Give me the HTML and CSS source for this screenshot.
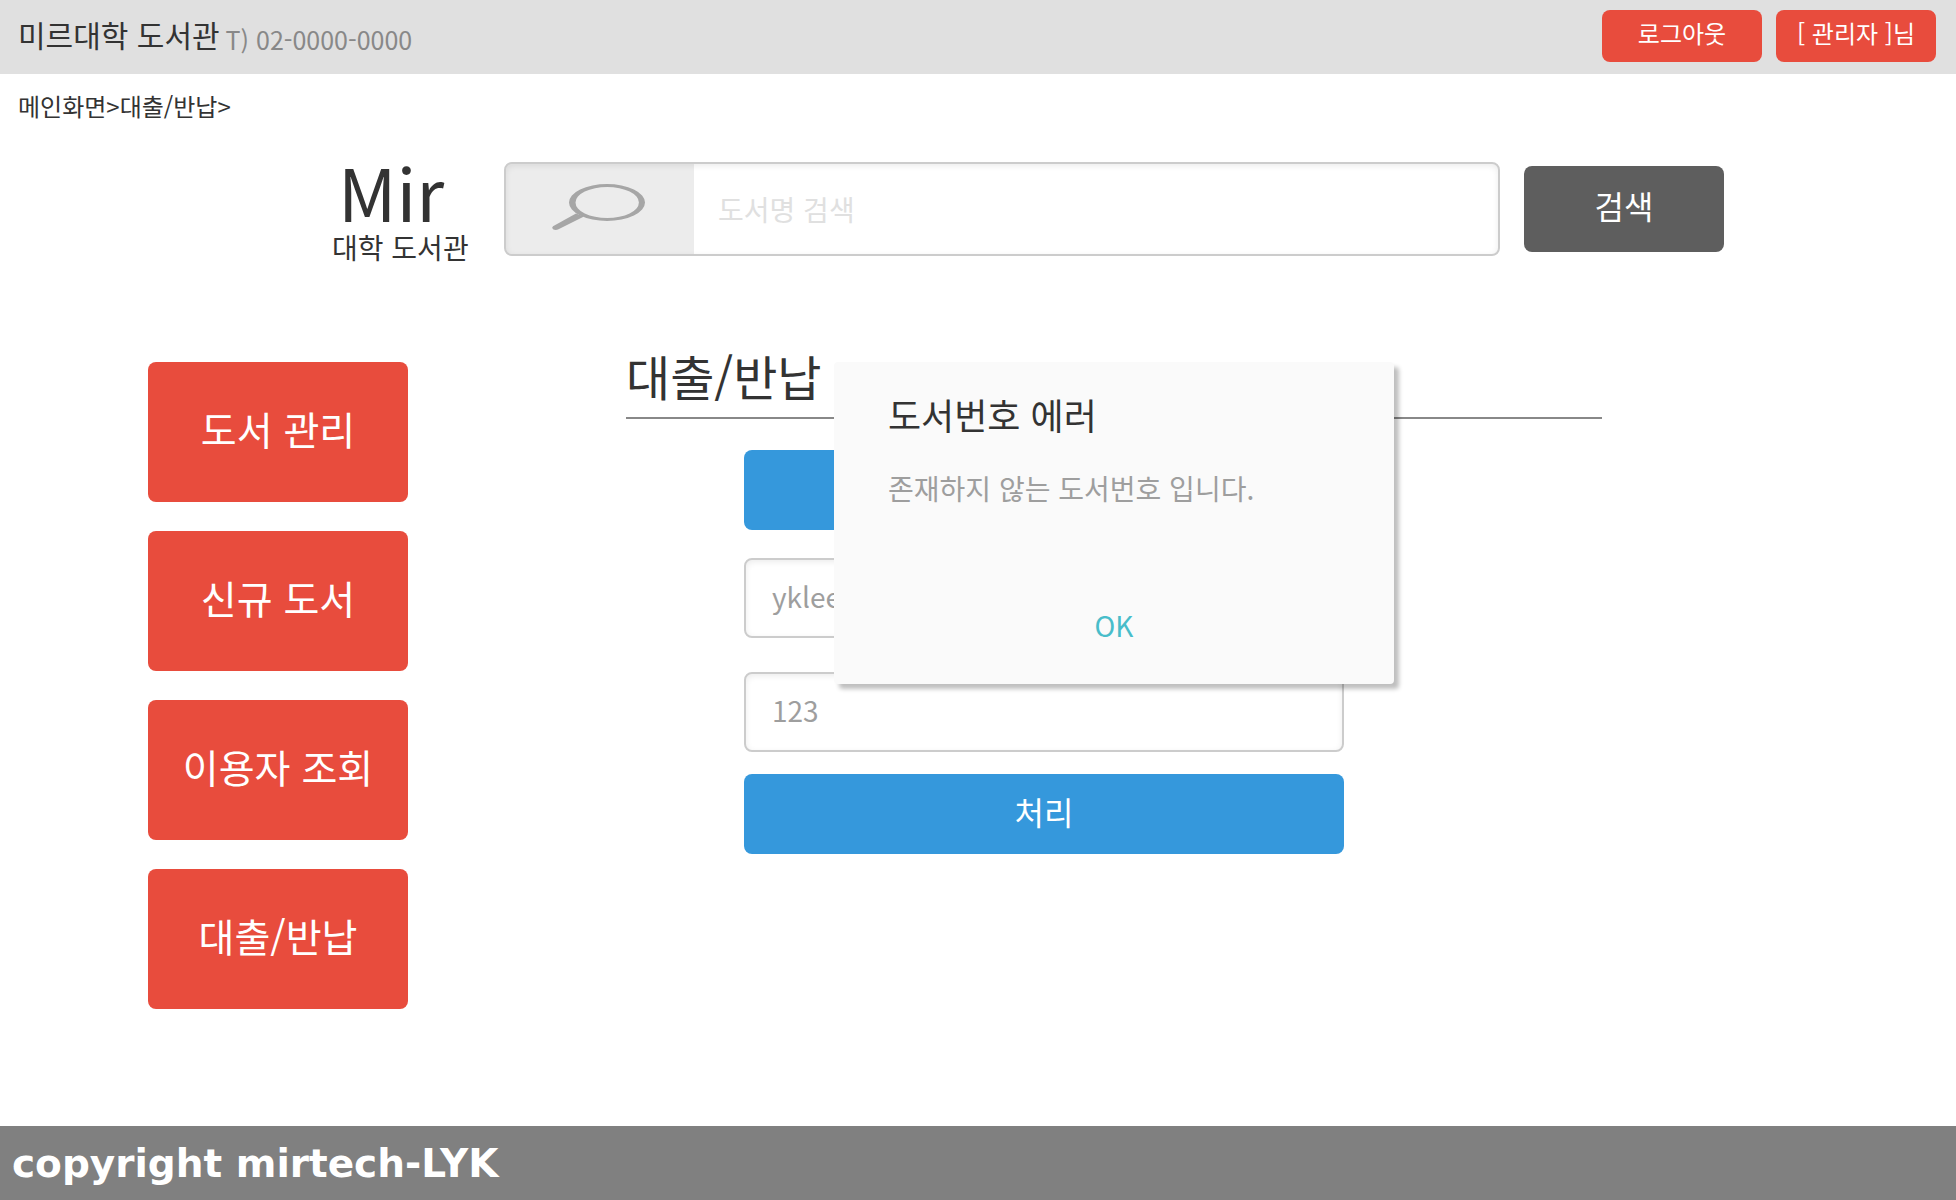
FILE: index.html
```html
<!DOCTYPE html>
<html lang="ko">
<head>
  <meta charset="utf-8">
  <meta name="viewport" content="width=device-width, initial-scale=1">
  <title>미르대학 도서관 - 대출/반납</title>
  <link rel="stylesheet" href="styles.css">
</head>
<body>
  <header class="topbar">
    <div class="topbar-brand">
      <span class="topbar-name">미르대학 도서관</span>
      <span class="topbar-phone">T) 02-0000-0000</span>
    </div>
    <div class="topbar-actions">
      <button type="button" class="btn btn-red btn-small">로그아웃</button>
      <button type="button" class="btn btn-red btn-small">[ 관리자 ]님</button>
    </div>
  </header>

  <nav class="breadcrumb" aria-label="현재 위치"><a href="#">메인화면</a>&gt;<a href="#">대출/반납</a>&gt;</nav>

  <form class="search" role="search">
    <a class="logo" href="#">
      <span class="logo-name">Mir</span>
      <span class="logo-sub">대학 도서관</span>
    </a>
    <div class="search-field">
      <label class="search-icon" for="book-search" aria-label="도서명">
        <svg width="94" height="50" viewBox="553 184 94 50" overflow="visible" aria-hidden="true">
          <path fill="#a6a6a6" fill-rule="evenodd" d="M569 202.500a38 18.500 0 1 0 76 0a38 18.500 0 1 0-76 0zM575.500 202.500a31.700 15.500 0 1 1 63.400 0a31.700 15.500 0 1 1-63.400 0z"/>
          <path fill="#a6a6a6" d="M576 213.500L553 226.300Q551.300 228 553 229.300Q555.500 230.600 558.500 229.300L584 216.500z"/>
        </svg>
      </label>
      <input class="search-input" id="book-search" type="text" placeholder="도서명 검색">
    </div>
    <button type="submit" class="btn btn-gray">검색</button>
  </form>

  <main class="content">
    <nav class="menu" aria-label="관리 메뉴">
      <button type="button" class="btn btn-red btn-menu">도서 관리</button>
      <button type="button" class="btn btn-red btn-menu">신규 도서</button>
      <button type="button" class="btn btn-red btn-menu">이용자 조회</button>
      <button type="button" class="btn btn-red btn-menu">대출/반납</button>
    </nav>

    <section class="panel">
      <h1 class="panel-title">대출/반납</h1>
      <form class="loan-form">
        <button type="button" class="btn btn-blue" aria-label="구분 선택"></button>
        <input class="text-input" type="text" value="yklee" aria-label="아이디">
        <input class="text-input text-input-book" type="text" value="123" aria-label="도서번호">
        <button type="submit" class="btn btn-blue btn-submit">처리</button>
      </form>

      <dialog class="alert" open aria-labelledby="alert-title">
        <h2 class="alert-title" id="alert-title">도서번호 에러</h2>
        <p class="alert-text">존재하지 않는 도서번호 입니다.</p>
        <button type="button" class="alert-ok">OK</button>
      </dialog>
    </section>
  </main>

  <footer class="footer">copyright mirtech-LYK</footer>
</body>
</html>
```

FILE: styles.css
```css
*,
*::before,
*::after {
  box-sizing: border-box;
}

body {
  margin: 0;
  min-height: 100vh;
  display: flex;
  flex-direction: column;
  background: #fff;
  color: #333;
  font-family: "Noto Sans CJK KR", sans-serif;
  font-size: 28px;
}

a {
  color: inherit;
  text-decoration: none;
}

button,
input {
  font: inherit;
}

/* Buttons */

.btn {
  border: 0;
  border-radius: 8px;
  padding: 0 0 8px;
  color: #fff;
  cursor: pointer;
}

.btn-red {
  background: #e84c3d;
}

.btn-blue {
  height: 80px;
  padding-bottom: 6px;
  background: #3598dc;
  font-size: 32px;
}

.btn-gray {
  width: 200px;
  height: 86px;
  flex: none;
  background: #5e5e5e;
  font-size: 32px;
}

.btn-small {
  width: 160px;
  height: 52px;
  font-size: 24px;
}

.btn-menu {
  height: 140px;
  font-size: 39px;
}

/* Top bar */

.topbar {
  display: flex;
  align-items: flex-start;
  justify-content: space-between;
  padding: 10px 20px 12px 18px;
  background: #e0e0e0;
}

.topbar-brand {
  display: flex;
  align-items: flex-end;
  gap: 6px;
}

.topbar-name {
  font-size: 30px;
  line-height: 48px;
}

.topbar-phone {
  color: #888;
  font-size: 25px;
  line-height: 38px;
}

.topbar-actions {
  display: flex;
  gap: 14px;
}

.breadcrumb {
  padding: 14px 18px;
  font-size: 24px;
  line-height: 36px;
}

/* Search */

.search {
  display: flex;
  align-items: center;
  padding: 17px 232px 0 332px;
}

.logo {
  display: flex;
  flex-direction: column;
  gap: 4px;
  width: 172px;
  flex: none;
}

.logo-name {
  padding-left: 6px;
  font-size: 72px;
  line-height: 72px;
}

.logo-sub {
  line-height: 32px;
}

.search-field {
  display: flex;
  flex: 1;
  height: 94px;
  margin-right: 24px;
  border: 2px solid #ccc;
  border-radius: 8px;
  box-shadow: inset 0 2px 6px rgba(0, 0, 0, 0.08);
  overflow: hidden;
}

.search-icon {
  display: flex;
  align-items: center;
  justify-content: center;
  width: 188px;
  flex: none;
  background: rgba(0, 0, 0, 0.075);
}

.search-input {
  flex: 1;
  min-width: 0;
  border: 0;
  padding: 0 24px;
  background: transparent;
  color: #333;
}

.search-input::placeholder {
  color: #e0e0e0;
  opacity: 1;
}

/* Content */

.content {
  display: flex;
  gap: 218px;
  padding: 99px 354px 100px 148px;
}

.menu {
  display: flex;
  flex-direction: column;
  gap: 29px;
  width: 260px;
  flex: none;
}

.panel {
  position: relative;
  flex: 1;
}

.panel-title {
  margin: -22px 0 0;
  padding-bottom: 7px;
  border-bottom: 2px solid #888;
  font-size: 48px;
  font-weight: 400;
  line-height: 70px;
}

.loan-form {
  display: flex;
  flex-direction: column;
  max-width: 600px;
  margin: 31px 0 0 118px;
}

.text-input {
  height: 80px;
  margin-top: 28px;
  border: 2px solid #ccc;
  border-radius: 8px;
  padding: 0 26px 4px;
  background: #fff;
  box-shadow: inset 0 2px 6px rgba(0, 0, 0, 0.08);
  color: #9e9e9e;
}

.text-input-book {
  margin-top: 34px;
}

.btn-submit {
  margin-top: 22px;
}

/* Alert */

.alert {
  position: absolute;
  top: 0;
  left: 0;
  right: 0;
  width: 560px;
  margin: 0 auto;
  border: 0;
  border-radius: 4px;
  padding: 26px 54px 36px;
  background: #fafafa;
  box-shadow: 5px 5px 4px rgba(0, 0, 0, 0.25);
  color: #333;
}

.alert-title {
  margin: 0;
  font-size: 36px;
  font-weight: 400;
  line-height: 52px;
}

.alert-text {
  margin: 26px 0 92px;
  color: #9e9e9e;
  line-height: 44px;
}

.alert-ok {
  display: block;
  margin: 0 auto;
  border: 0;
  padding: 0 20px;
  background: transparent;
  color: #48bdca;
  line-height: 46px;
  cursor: pointer;
}

/* Footer */

.footer {
  margin-top: auto;
  padding: 12px 12px 10px;
  background: #808080;
  color: #fff;
  font-family: "DejaVu Sans", sans-serif;
  font-size: 39px;
  font-weight: 700;
  line-height: 52px;
}
```
